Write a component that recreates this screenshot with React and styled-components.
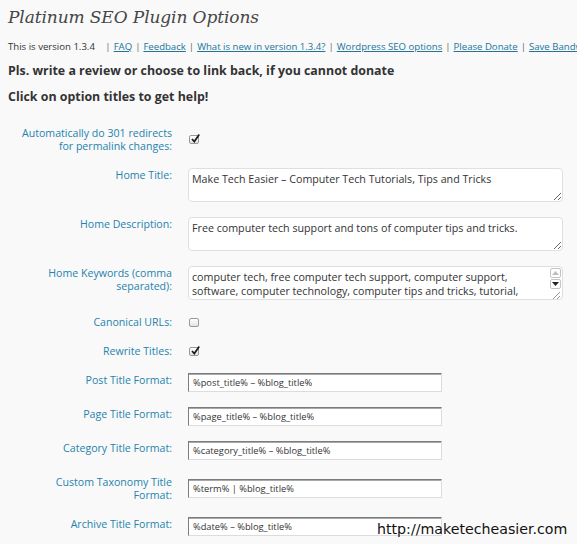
import React from 'react'
import styled, { createGlobalStyle } from 'styled-components'

const GlobalStyle = createGlobalStyle`
  html, body {
    margin: 0;
    padding: 0;
    overflow: hidden;
    background: #f9f9f9;
  }
  body {
    font-family: "Open Sans", "DejaVu Sans", sans-serif;
    color: #333;
  }
`

const Page = styled.div`
  position: relative;
  padding: 0 8px;
  height: 544px;
  box-sizing: border-box;
`

const Title = styled.h2`
  margin: 2px 0 0;
  font-family: "DejaVu Serif", Georgia, serif;
  font-style: italic;
  font-weight: normal;
  font-size: 17px;
  letter-spacing: -0.1px;
  line-height: 30px;
  color: #464646;
`

const VersionLine = styled.p`
  margin: 7px 0 0;
  font-size: 9.6px;
  line-height: 16px;
  white-space: nowrap;
  color: #333;
`

const Sep = styled.span`
  color: #666;
  margin: 0 3px;
`

const Link = styled.a`
  color: #21759b;
  text-decoration: underline;
`

const Notice = styled.p`
  margin: ${p => p.$gap}px 0 0;
  font-size: 12.4px;
  font-weight: bold;
  line-height: 16px;
  color: #333;
`

const FormTable = styled.div`
  display: grid;
  grid-template-columns: 164px 1fr;
  column-gap: 16px;
  margin-top: 14px;
`

const Label = styled.div`
  padding: 8px 0 8px;
  text-align: right;
  font-size: 10.6px;
  line-height: 13px;
  color: #2583ad;
`

const Field = styled.div`
  padding: 7px 0 8px;
  display: flex;
  align-items: center;
`

const Box = styled.span`
  display: inline-block;
  position: relative;
  width: 10px;
  height: 9px;
  margin-left: 1px;
  border: 1px solid #9a9a9a;
  border-radius: 2px;
  background: linear-gradient(#ffffff, #e4e4e4);
  box-sizing: border-box;
`

const Tick = styled.svg`
  position: absolute;
  left: 0;
  top: -3px;
`

const Area = styled.textarea`
  display: block;
  width: 375px;
  height: 34px;
  margin: 0;
  padding: 3px 3px;
  box-sizing: border-box;
  border: 1px solid #dfdfdf;
  border-radius: 4px;
  background: #fff;
  font-family: "Open Sans", "DejaVu Sans", sans-serif;
  font-size: 10.7px;
  line-height: 14px;
  color: #333;
  resize: ${p => (p.$fixed ? 'none' : 'vertical')};
  overflow: hidden;
  padding-right: ${p => (p.$fixed ? '18px' : '3px')};
`

const AreaWrap = styled.div`
  position: relative;
  width: 375px;
  height: 34px;
`

const Scroller = styled.div`
  position: absolute;
  right: 2px;
  top: 2px;
  bottom: 1px;
  width: 11px;
  display: flex;
  flex-direction: column;
  gap: 1px;
`

const Arrow = styled.div`
  height: 8px;
  border: 1px solid #c4c4c4;
  border-radius: 2px;
  background: #fff;
  display: flex;
  align-items: center;
  justify-content: center;
`

const Grip = styled.svg`
  margin-top: auto;
`

const TextInput = styled.input`
  width: 254px;
  height: 19px;
  margin: 0;
  padding: 0 4px;
  box-sizing: border-box;
  border: 1px solid;
  border-color: #7c7c7c #dcdcdc #dcdcdc #7c7c7c;
  box-shadow: inset 0 1px 0 #a8a8a8;
  background: #fff;
  font-family: "Open Sans", "DejaVu Sans", sans-serif;
  font-size: 9.3px;
  color: #333;
`

const Watermark = styled.div`
  position: absolute;
  left: 377px;
  top: 519px;
  font-family: "DejaVu Sans", sans-serif;
  font-size: 14.2px;
  line-height: 16px;
  color: #111;
  white-space: nowrap;
`

const Check = ({ checked }) => (
  <Box>
    {checked && (
      <Tick width="11" height="11" viewBox="0 0 11 11">
        <path d="M2 6 L4.3 8.6 L9.2 1.5" fill="none" stroke="#1a1a1a" strokeWidth="1.7" />
      </Tick>
    )}
  </Box>
)

const Keywords = ({ value }) => (
  <AreaWrap>
    <Area $fixed defaultValue={value} />
    <Scroller>
      <Arrow>
        <svg width="7" height="4" viewBox="0 0 7 4"><path d="M0 4 L3.5 0 L7 4 Z" fill="#bdbdbd" /></svg>
      </Arrow>
      <Arrow>
        <svg width="7" height="4" viewBox="0 0 7 4"><path d="M0 0 L3.5 4 L7 0 Z" fill="#222" /></svg>
      </Arrow>
      <Grip width="11" height="9" viewBox="0 0 11 9">
        <path d="M3 9 L10 2 M7 9 L10 6" stroke="#999" strokeWidth="1" />
      </Grip>
    </Scroller>
  </AreaWrap>
)

const rows = [
  { label: ['Automatically do 301 redirects', 'for permalink changes:'], type: 'check', checked: true },
  { label: ['Home Title:'], type: 'area', value: 'Make Tech Easier – Computer Tech Tutorials, Tips and Tricks' },
  { label: ['Home Description:'], type: 'area', value: 'Free computer tech support and tons of computer tips and tricks.' },
  {
    label: ['Home Keywords (comma', 'separated):'],
    type: 'keywords',
    value: 'computer tech, free computer tech support, computer support,\nsoftware, computer technology, computer tips and tricks, tutorial,',
  },
  { label: ['Canonical URLs:'], type: 'check', checked: false },
  { label: ['Rewrite Titles:'], type: 'check', checked: true },
  { label: ['Post Title Format:'], type: 'text', value: '%post_title% – %blog_title%' },
  { label: ['Page Title Format:'], type: 'text', value: '%page_title% – %blog_title%' },
  { label: ['Category Title Format:'], type: 'text', value: '%category_title% – %blog_title%' },
  { label: ['Custom Taxonomy Title', 'Format:'], type: 'text', value: '%term% | %blog_title%' },
  { label: ['Archive Title Format:'], type: 'text', value: '%date% – %blog_title%' },
]

const renderField = (row) => {
  if (row.type === 'check') return <Check checked={row.checked} />
  if (row.type === 'area') return <Area defaultValue={row.value} />
  if (row.type === 'keywords') return <Keywords value={row.value} />
  return <TextInput type="text" defaultValue={row.value} />
}

const links = ['FAQ', 'Feedback', 'What is new in version 1.3.4?', 'Wordpress SEO options', 'Please Donate', 'Save Bandwidth']

export default function App() {
  return (
    <Page>
      <GlobalStyle />
      <Title>Platinum SEO Plugin Options</Title>
      <VersionLine>
        This is version 1.3.4&nbsp;&nbsp;&nbsp;
        {links.map(l => (
          <React.Fragment key={l}>
            <Sep>|</Sep>
            <Link href="#">{l}</Link>
          </React.Fragment>
        ))}
      </VersionLine>
      <Notice $gap={8}>Pls. write a review or choose to link back, if you cannot donate</Notice>
      <Notice $gap={10}>Click on option titles to get help!</Notice>
      <FormTable>
        {rows.map(row => (
          <React.Fragment key={row.label[0]}>
            <Label>
              {row.label.map((line, i) => (
                <React.Fragment key={line}>
                  {i > 0 && <br />}
                  {line}
                </React.Fragment>
              ))}
            </Label>
            <Field>{renderField(row)}</Field>
          </React.Fragment>
        ))}
      </FormTable>
      <Watermark>http://maketecheasier.com</Watermark>
    </Page>
  )
}
